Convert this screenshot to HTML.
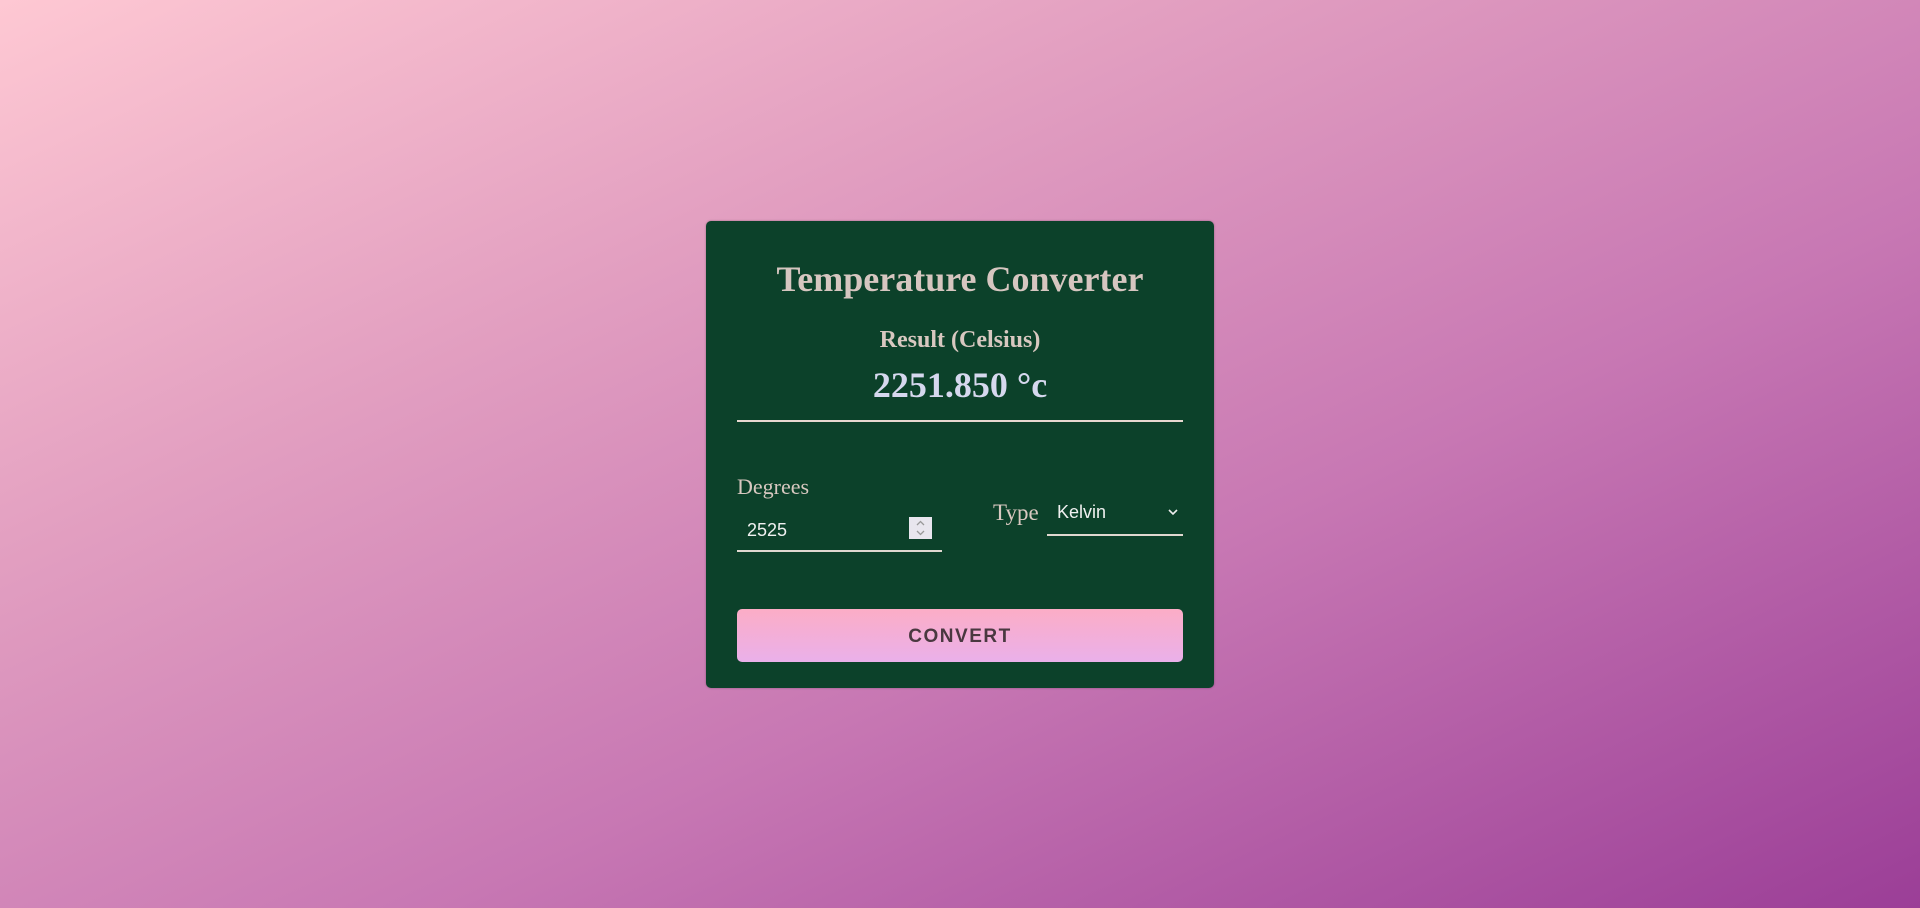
<!DOCTYPE html>
<html><head><meta charset="utf-8"><style>
html,body{margin:0;padding:0;width:1920px;height:908px;overflow:hidden;}
body{background:linear-gradient(155deg,#fec8d3 0%,#e3a0c1 30%,#c777b3 62%,#9b3e97 100%);position:relative;font-family:"Liberation Serif",serif;}
.card{position:absolute;left:706px;top:221px;width:508px;height:467px;background:#0c412a;border-radius:5px;box-shadow:0 0 2px rgba(0,0,0,.3);}
.abs{position:absolute;white-space:nowrap;}
.t{left:0;width:508px;text-align:center;}
</style></head><body>
<div class="card">
  <div class="abs t" style="top:38px;font-size:36px;font-weight:bold;color:#d6c6c0;line-height:40px;">Temperature Converter</div>
  <div class="abs t" style="top:105px;font-size:24px;font-weight:bold;color:#d8c8c0;line-height:28px;">Result (Celsius)</div>
  <div class="abs t" style="top:144px;font-size:36px;font-weight:bold;color:#d6d8ee;line-height:40px;">2251.850 °c</div>
  <div class="abs" style="left:31px;top:199px;width:446px;height:2px;background:#e8d8d0;"></div>
  <div class="abs" style="left:31px;top:253px;font-size:22px;color:#d8c8c0;line-height:26px;">Degrees</div>
  <div class="abs" style="left:41px;top:298px;font-family:'Liberation Sans',sans-serif;font-size:18px;color:#f0f0f0;line-height:22px;">2525</div>
  <div class="abs" style="left:203px;top:296px;width:23px;height:22px;background:#e8e6ee;">
    <svg width="23" height="22" viewBox="0 0 23 22"><path d="M8 8 L11.5 4.5 L15 8 M8 14 L11.5 17.5 L15 14" fill="none" stroke="#999" stroke-width="1.3"/></svg>
  </div>
  <div class="abs" style="left:31px;top:329px;width:205px;height:2px;background:#e0d8d0;"></div>
  <div class="abs" style="left:287px;top:279px;font-size:23px;color:#d8c8c0;line-height:26px;">Type</div>
  <div class="abs" style="left:351px;top:280px;font-family:'Liberation Sans',sans-serif;font-size:18px;color:#f0f0f0;line-height:22px;">Kelvin</div>
  <svg class="abs" style="left:460px;top:285px;" width="14" height="12" viewBox="0 0 14 12"><path d="M3 4 L7 8 L11 4" fill="none" stroke="#eee" stroke-width="1.6"/></svg>
  <div class="abs" style="left:341px;top:313px;width:136px;height:2px;background:#e0d8d0;"></div>
  <div class="abs" style="left:31px;top:388px;width:446px;height:53px;border-radius:5px;background:linear-gradient(180deg,#fcadc6,#eab0ea);text-align:center;line-height:56px;font-family:'Liberation Sans',sans-serif;font-weight:bold;font-size:19px;letter-spacing:1.5px;color:#4a3840;">CONVERT</div>
</div>
</body></html>
